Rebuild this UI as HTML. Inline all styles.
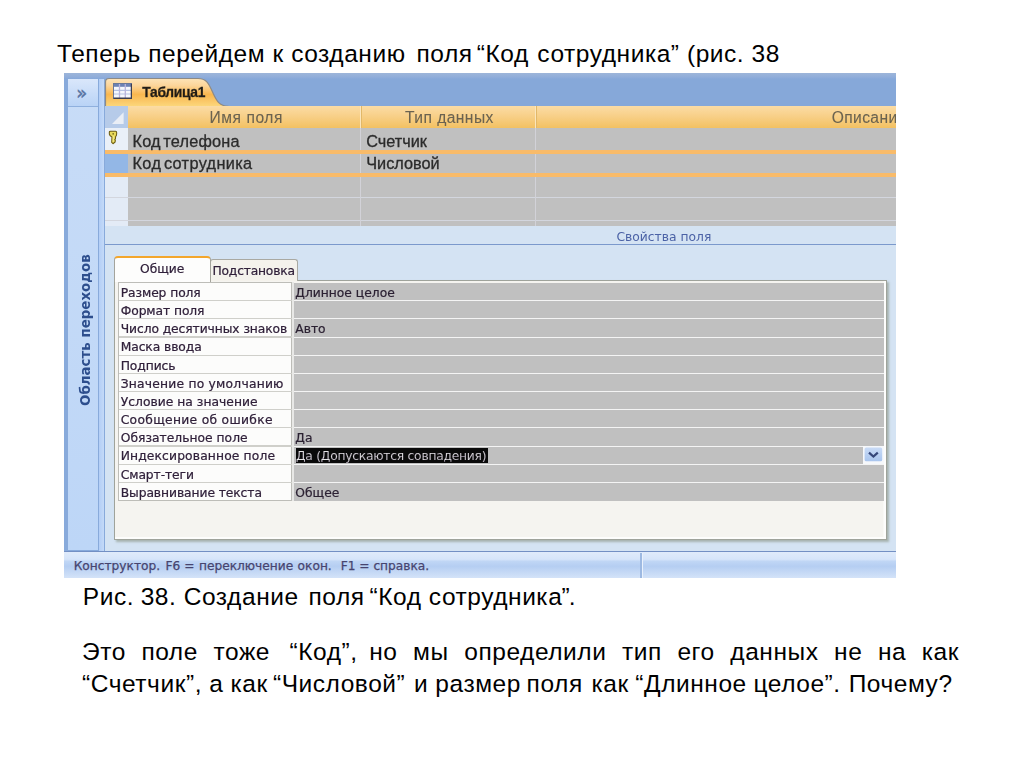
<!DOCTYPE html>
<html lang="ru">
<head>
<meta charset="utf-8">
<title>Код сотрудника</title>
<style>
html,body{margin:0;padding:0;background:#fff;}
body{width:1024px;height:768px;position:relative;overflow:hidden;font-family:"Liberation Sans",sans-serif;color:#000;}
.t{position:absolute;white-space:nowrap;font-size:24.5px;letter-spacing:0.55px;line-height:28px;color:#000;}
#shot{position:absolute;left:64px;top:72.5px;width:832px;height:505.3px;background:#d4e3f3;overflow:hidden;}
#in{position:absolute;left:-64px;top:-72.5px;width:1024px;height:768px;filter:blur(0.55px);}
#in div{position:absolute;box-sizing:border-box;}
#in .x{white-space:nowrap;line-height:20px;height:20px;}
.ui{font-family:"DejaVu Sans","Liberation Sans",sans-serif;}
.cal{font-family:"Liberation Sans",sans-serif;color:#2b2b2b;-webkit-text-stroke:0.3px #2b2b2b;}
.pn,.pv{-webkit-text-stroke:0.22px #30203a;}
.pn{letter-spacing:-0.08px;font-size:12.3px;color:#30203a;}
.pv{font-size:12.3px;color:#2a2230;left:295px;}
</style>
</head>
<body>
<div class="t" id="title" style="left:57px;top:40px;">Теперь перейдем к созданию <span style="margin-left:3.5px">поля</span> <span style="margin-left:-3.2px">“Код</span> <span style="margin-left:1.2px">сотрудника”</span> (рис. 38</div>

<div id="shot"><div id="in">
<div  style="left:64px;top:72px;width:832px;height:34.3px;background:#86a8d9;"></div>
<div  style="left:64px;top:72px;width:41px;height:479.5px;background:#88aadb;"></div>
<div  style="left:68px;top:79px;width:30.3px;height:471px;background:linear-gradient(#c8dcf7,#bdd6f7);"></div>
<div  style="left:68px;top:78.6px;width:30.1px;height:28.7px;background:linear-gradient(#dae7fb,#b9d3f6);border-bottom:1.3px solid #8fb0de;"></div>
<div  style="left:99.3px;top:79px;width:5.0px;height:472px;background:linear-gradient(90deg,#b3cef6,#c4daf8);"></div>
<div  style="left:64px;top:72px;width:832px;height:6.6px;background:linear-gradient(#a0b7d9,#91aeda 70%,#86a8d9);"></div>
<div class="ui" id="chev" style="left:66.8px;top:80.6px;width:30px;height:24px;line-height:24px;text-align:center;font-size:18px;color:#5873a3;-webkit-text-stroke:0.4px #5873a3;">»</div>
<div class="ui x" id="nav" style="left:75.5px;top:406px;width:152px;transform-origin:0 0;transform:rotate(-90deg);font-size:13.4px;font-weight:bold;color:#2d4e8d;">Область переходов</div>
<div  style="left:105px;top:106.3px;width:791px;height:445.5px;background:#d4e3f3;"></div>
<svg style="position:absolute;left:104px;top:76px" width="130" height="31" viewBox="0 0 130 31">
<defs><linearGradient id="tg" x1="0" y1="0" x2="0" y2="1"><stop offset="0" stop-color="#fde4b8"/><stop offset="0.25" stop-color="#fcd59a"/><stop offset="0.56" stop-color="#f9b74f"/><stop offset="0.78" stop-color="#fac767"/><stop offset="1" stop-color="#fcd97e"/></linearGradient></defs>
<path d="M1.5 31 L1.5 6 Q1.5 2.5 5 2.5 L94 2.5 C103 2.5 105 8 109 17 C113 26 116 30 124 30.4 L124 31 Z" fill="url(#tg)" stroke="#8d8a86" stroke-width="1.2"/>
</svg>
<svg style="position:absolute;left:113px;top:83px" width="19" height="16" viewBox="0 0 19 16">
<rect x="0.5" y="0.5" width="18" height="15" fill="#f6f8fd" stroke="#6a7898" stroke-width="1"/>
<rect x="1" y="1" width="17" height="2.8" fill="#6c82b4"/>
<path d="M1 7.4h17M1 11h17" stroke="#b4c2e4" stroke-width="1.2" fill="none"/>
<path d="M6.5 1v14M12.3 1v14" stroke="#b9b4dc" stroke-width="1.3" fill="none"/>
<path d="M0.6 15.3h17.9v-14.6" stroke="#3c3f52" stroke-width="1.5" fill="none"/>
</svg>
<div id="tabname" class="x cal" style="left:142.3px;top:83.1px;font-size:13.8px;font-weight:bold;color:#1f1a12;letter-spacing:-0.3px;">Таблица1</div>
<div  style="left:105px;top:106.3px;width:791px;height:21.9px;background:linear-gradient(#fbdca5,#f8d089 45%,#f3c162);"></div>
<div  style="left:105px;top:106.3px;width:22.5px;height:21.9px;background:#b6cbe9;"></div>
<svg style="position:absolute;left:111px;top:111px" width="14" height="14" viewBox="0 0 14 14"><path d="M1 13 L12.6 13 L12.6 1.2 Z" fill="#e9eef6"/></svg>
<div  style="left:360.09999999999997px;top:106.3px;width:1.2px;height:21.9px;background:#fbe6bd;"></div>
<div  style="left:361.3px;top:106.3px;width:0.8px;height:21.9px;background:#e2b868;"></div>
<div  style="left:535.1px;top:106.3px;width:1.2px;height:21.9px;background:#fbe6bd;"></div>
<div  style="left:536.3000000000001px;top:106.3px;width:0.8px;height:21.9px;background:#e2b868;"></div>
<div id="h1" class="x cal" style="left:209.5px;top:107.66px;font-size:15.6px;color:#6b6350;-webkit-text-stroke:0.1px #6b6350;letter-spacing:0.55px;">Имя поля</div>
<div id="h2" class="x cal" style="left:405px;top:107.66px;font-size:15.6px;color:#6b6350;-webkit-text-stroke:0.1px #6b6350;letter-spacing:0.45px;">Тип данных</div>
<div id="h3" class="x cal" style="left:831.7px;top:107.66px;font-size:15.6px;color:#6b6350;-webkit-text-stroke:0.1px #6b6350;letter-spacing:0.4px;">Описание</div>
<div  style="left:127.5px;top:128.2px;width:768.5px;height:98.1px;background:#c0c0c0;"></div>
<div  style="left:105px;top:128.2px;width:22.5px;height:98.1px;background:#e3ebf6;"></div>
<div  style="left:105px;top:128.2px;width:22.5px;height:22.0px;background:#eaf0f8;"></div>
<div  style="left:105px;top:150.2px;width:791px;height:3.8px;background:#f9bb69;"></div>
<div  style="left:105px;top:154px;width:22.5px;height:18.8px;background:#93b7e6;"></div>
<div  style="left:105px;top:172.8px;width:791px;height:3.8px;background:#f9bb69;"></div>
<div  style="left:105px;top:197.0px;width:791px;height:1.2px;background:#d3d6de;"></div>
<div  style="left:105px;top:219.6px;width:791px;height:1.2px;background:#d3d6de;"></div>
<div  style="left:360.09999999999997px;top:128.2px;width:1.2px;height:22.0px;background:#d2d2d8;"></div>
<div  style="left:360.09999999999997px;top:154px;width:1.2px;height:18.8px;background:#d2d2d8;"></div>
<div  style="left:360.09999999999997px;top:176.6px;width:1.2px;height:49.7px;background:#d2d2d8;"></div>
<div  style="left:535.1px;top:128.2px;width:1.2px;height:22.0px;background:#d2d2d8;"></div>
<div  style="left:535.1px;top:154px;width:1.2px;height:18.8px;background:#d2d2d8;"></div>
<div  style="left:535.1px;top:176.6px;width:1.2px;height:49.7px;background:#d2d2d8;"></div>
<svg style="position:absolute;left:106px;top:130px" width="12" height="16" viewBox="0 0 12 16">
<g transform="translate(0.9 0.2) scale(0.87 0.97)"><path d="M2.8 2.2 Q2.8 1.1 4 1.1 L10 1.1 Q11.2 1.1 11.2 2.3 L11.2 4 Q11.2 5.6 10 6.6 L9.8 9 L9 9.7 L9.7 10.5 L9.4 12.2 L7 13.9 L5.5 12.6 L5.8 7 Q3 5.6 2.8 4 Z" fill="#e9da5c" stroke="#6c5c12" stroke-width="1.2" stroke-linejoin="round"/>
<circle cx="7.2" cy="3.7" r="0.9" fill="#6c5c12"/>
<path d="M7.4 6 L7.2 12" stroke="#f8f0a0" stroke-width="0.8"/></g>
</svg>
<div id="r1a" class="x cal" style="left:132.5px;top:130.61px;font-size:16.3px;letter-spacing:0.2px;word-spacing:-2.2px;">Код телефона</div>
<div id="r2a" class="x cal" style="left:132.5px;top:153.31px;font-size:16.3px;letter-spacing:0.35px;word-spacing:-2.2px;">Код сотрудника</div>
<div id="r1b" class="x cal" style="left:366.2px;top:130.61px;font-size:16.3px;">Счетчик</div>
<div id="r2b" class="x cal" style="left:366.2px;top:153.31px;font-size:16.3px;">Числовой</div>
<div id="fp" class="x ui" style="left:616.5px;top:226.63px;font-size:12.3px;color:#4b62a6;">Свойства поля</div>
<div  style="left:105px;top:243.5px;width:791px;height:1.3px;background:#7b99cc;"></div>
<div  style="left:113.8px;top:280.2px;width:773.5px;height:259.8px;background:#f5f4f0;border:1px solid #9fa39b;box-shadow:inset -2.5px -2px 0 #fdfdfc, 1.6px 1.6px 2px rgba(130,140,120,0.55);"></div>
<div  style="left:210px;top:258.8px;width:87.5px;height:22.7px;background:#f4f2ec;border:1px solid #a9a9a2;border-bottom:none;border-radius:3px 3px 0 0;"></div>
<div  style="left:113.8px;top:255.6px;width:96.8px;height:26.4px;background:#fdfdfc;border:1px solid #a4a49c;border-bottom:none;border-top:2.2px solid #f3a62c;border-radius:4px 4px 0 0;"></div>
<div id="tb1" class="x ui" style="left:140px;top:259.33px;font-size:12.3px;color:#30203a;-webkit-text-stroke:0.2px #30203a;">Общие</div>
<div id="tb2" class="x ui" style="left:212.5px;top:260.93px;font-size:12.3px;color:#30203a;-webkit-text-stroke:0.2px #30203a;letter-spacing:-0.2px;">Подстановка</div>
<div  style="left:292px;top:283.2px;width:592px;height:217.74px;background:#c0c0c0;"></div>
<div  style="left:118.2px;top:281.9px;width:173.4px;height:219.04px;background:#fcfcfb;border:1px solid #bdbdb8;"></div>
<div  style="left:291.6px;top:281.9px;width:2.2px;height:219.04px;background:#e8e8e6;"></div>
<div  style="left:119.2px;top:300.07px;width:172.4px;height:1.2px;background:#cfcfca;"></div>
<div  style="left:293.8px;top:300.17px;width:590.2px;height:1.0px;background:#f4f4f4;"></div>
<div  style="left:119.2px;top:318.24px;width:172.4px;height:1.2px;background:#cfcfca;"></div>
<div  style="left:293.8px;top:318.34000000000003px;width:590.2px;height:1.0px;background:#f4f4f4;"></div>
<div  style="left:119.2px;top:336.40999999999997px;width:172.4px;height:1.2px;background:#cfcfca;"></div>
<div  style="left:293.8px;top:336.51px;width:590.2px;height:1.0px;background:#f4f4f4;"></div>
<div  style="left:119.2px;top:354.58px;width:172.4px;height:1.2px;background:#cfcfca;"></div>
<div  style="left:293.8px;top:354.68px;width:590.2px;height:1.0px;background:#f4f4f4;"></div>
<div  style="left:119.2px;top:372.75px;width:172.4px;height:1.2px;background:#cfcfca;"></div>
<div  style="left:293.8px;top:372.85px;width:590.2px;height:1.0px;background:#f4f4f4;"></div>
<div  style="left:119.2px;top:390.91999999999996px;width:172.4px;height:1.2px;background:#cfcfca;"></div>
<div  style="left:293.8px;top:391.02px;width:590.2px;height:1.0px;background:#f4f4f4;"></div>
<div  style="left:119.2px;top:409.09px;width:172.4px;height:1.2px;background:#cfcfca;"></div>
<div  style="left:293.8px;top:409.19px;width:590.2px;height:1.0px;background:#f4f4f4;"></div>
<div  style="left:119.2px;top:427.26px;width:172.4px;height:1.2px;background:#cfcfca;"></div>
<div  style="left:293.8px;top:427.36px;width:590.2px;height:1.0px;background:#f4f4f4;"></div>
<div  style="left:119.2px;top:445.43px;width:172.4px;height:1.2px;background:#cfcfca;"></div>
<div  style="left:293.8px;top:445.53000000000003px;width:590.2px;height:1.0px;background:#f4f4f4;"></div>
<div  style="left:119.2px;top:463.6px;width:172.4px;height:1.2px;background:#cfcfca;"></div>
<div  style="left:293.8px;top:463.70000000000005px;width:590.2px;height:1.0px;background:#f4f4f4;"></div>
<div  style="left:119.2px;top:481.77px;width:172.4px;height:1.2px;background:#cfcfca;"></div>
<div  style="left:293.8px;top:481.87px;width:590.2px;height:1.0px;background:#f4f4f4;"></div>
<div  style="left:296px;top:448.03000000000003px;width:191.5px;height:15.0px;background:#0a0a0a;"></div>
<div id="pn0" class="x ui pn" style="left:120.7px;top:282.93px;font-size:12.3px;">Размер поля</div>
<div id="pv0" class="x ui pv" style="left:295.3px;top:282.93px;font-size:12.3px;">Длинное целое</div>
<div id="pn1" class="x ui pn" style="left:120.7px;top:301.1px;font-size:12.3px;">Формат поля</div>
<div id="pn2" class="x ui pn" style="left:120.7px;top:319.27px;font-size:12.3px;">Число десятичных знаков</div>
<div id="pv2" class="x ui pv" style="left:295.3px;top:319.27px;font-size:12.3px;">Авто</div>
<div id="pn3" class="x ui pn" style="left:120.7px;top:337.44px;font-size:12.3px;">Маска ввода</div>
<div id="pn4" class="x ui pn" style="left:120.7px;top:355.61px;font-size:12.3px;">Подпись</div>
<div id="pn5" class="x ui pn" style="left:120.7px;top:373.78px;font-size:12.3px;letter-spacing:0.22px;">Значение по умолчанию</div>
<div id="pn6" class="x ui pn" style="left:120.7px;top:391.95px;font-size:12.3px;letter-spacing:0.03px;">Условие на значение</div>
<div id="pn7" class="x ui pn" style="left:120.7px;top:410.12px;font-size:12.3px;letter-spacing:0.31px;">Сообщение об ошибке</div>
<div id="pn8" class="x ui pn" style="left:120.7px;top:428.29px;font-size:12.3px;letter-spacing:0.02px;">Обязательное поле</div>
<div id="pv8" class="x ui pv" style="left:295.3px;top:428.29px;font-size:12.3px;">Да</div>
<div id="pn9" class="x ui pn" style="left:120.7px;top:446.46px;font-size:12.3px;letter-spacing:0.14px;">Индексированное поле</div>
<div id="pv9" class="x ui pv" style="left:296px;top:446.46px;font-size:12.3px;color:#e4e4e4;letter-spacing:-0.25px;">Да (Допускаются совпадения)</div>
<div id="pn10" class="x ui pn" style="left:120.7px;top:464.63px;font-size:12.3px;">Смарт-теги</div>
<div id="pn11" class="x ui pn" style="left:120.7px;top:482.8px;font-size:12.3px;">Выравнивание текста</div>
<div id="pv11" class="x ui pv" style="left:295.3px;top:482.8px;font-size:12.3px;">Общее</div>
<svg style="position:absolute;left:863px;top:446.43px" width="21" height="18" viewBox="0 0 21 18">
<defs><linearGradient id="dg" x1="0" y1="0" x2="0" y2="1"><stop offset="0" stop-color="#c9dbf6"/><stop offset="1" stop-color="#a9c5ee"/></linearGradient></defs>
<rect x="0" y="0" width="21" height="18" fill="#f6f8fb"/>
<rect x="1.6" y="1.6" width="17.6" height="13.6" rx="1.5" fill="url(#dg)"/>
<path d="M6 6.6 L10.4 10.6 L14.8 6.6" stroke="#36477a" stroke-width="2.2" fill="none"/>
</svg>
<div  style="left:64px;top:550.9px;width:832px;height:1.5px;background:#7390c4;"></div>
<div  style="left:64px;top:552.4px;width:832px;height:25.6px;background:linear-gradient(#e0ebfb 0%,#d6e5fa 28%,#c0d6f5 36%,#b5cef2 55%,#d4e3f8 100%);"></div>
<div  style="left:640.4px;top:553px;width:1.2px;height:25px;background:#9db9e2;"></div>
<div  style="left:641.6px;top:553px;width:1.2px;height:25px;background:#e9f1fc;"></div>
<div id="st" class="x ui" style="left:73.7px;top:555.67px;font-size:12.2px;color:#46446f;-webkit-text-stroke:0.25px #46446f;">Конструктор.&nbsp; <span style="margin-left:-2.2px">F6</span> = <span style="margin-left:0.6px">переключение</span> <span style="margin-left:0.6px">окон.</span>&nbsp; <span style="margin-left:1.2px">F1</span> = справка.</div>
</div></div>

<div class="t" id="cap" style="left:82.8px;top:583px;">Рис. <span style="margin-left:-0.8px">38.</span> Создание <span style="margin-left:2.5px">поля</span> <span style="margin-left:-2.5px">“Код</span> сотрудника<span style="letter-spacing:-0.9px;margin-left:-0.8px">”.</span></div>
<div class="t" id="p1" style="left:82px;top:638px;width:877px;text-align:justify;text-align-last:justify;">Это поле тоже <span style="margin-left:4px;margin-right:-4px">“Код”,</span> но мы определили тип его данных не на как</div>
<div class="t" id="p2" style="left:82px;top:670px;word-spacing:-0.2px;">“Счетчик”, а как <span style="margin-left:-2px">“Числовой”</span> <span style="margin-left:1.5px">и</span> размер <span style="margin-left:-1.5px">поля</span> <span style="margin-left:1.5px">как</span> <span style="margin-left:-0.5px">“Длинное</span> <span style="margin-left:-0.5px">целое”.</span> <span style="margin-left:0.8px">Почему?</span></div>
</body>
</html>
